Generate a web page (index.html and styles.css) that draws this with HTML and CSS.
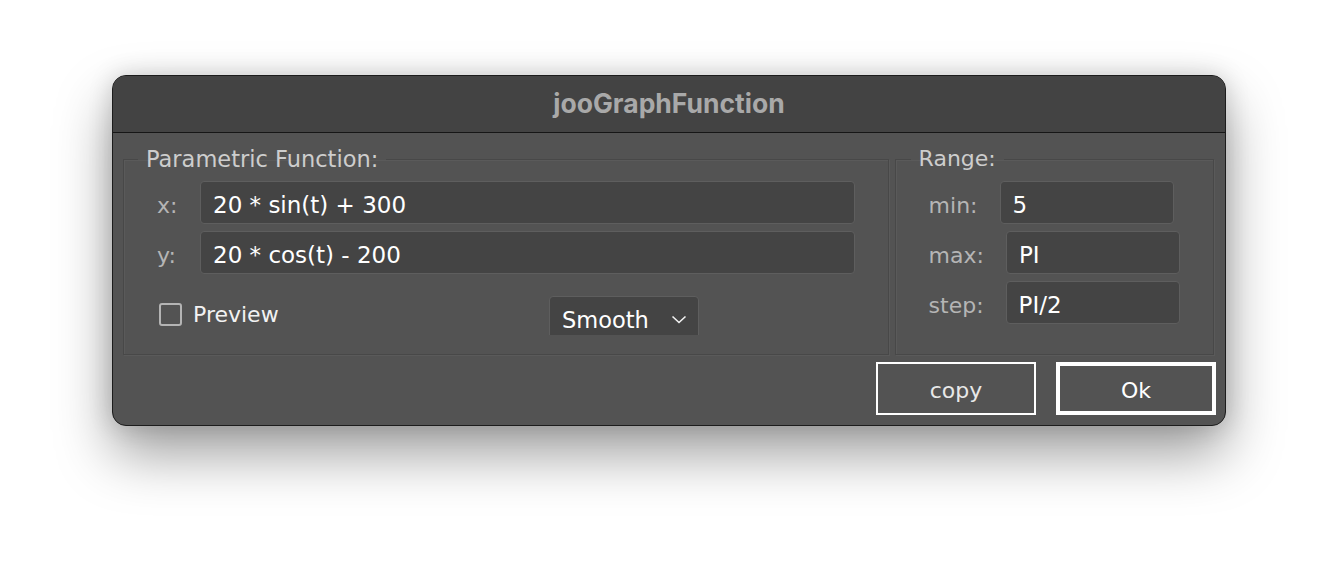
FILE: index.html
```html
<!DOCTYPE html>
<html lang="en">
<head>
<meta charset="utf-8">
<title>jooGraphFunction</title>
<link rel="stylesheet" href="styles.css">
</head>
<body>
<div class="stage">
  <div class="window">
    <div class="titlebar">jooGraphFunction</div>
    <div class="content">
      <div class="panels">
        <fieldset class="panel panel-func">
          <legend>Parametric Function:</legend>
          <div class="panel-body">
            <div class="frow"><span class="flabel">x:</span><div class="field wide">20 * sin(t) + 300</div></div>
            <div class="frow"><span class="flabel">y:</span><div class="field wide">20 * cos(t) - 200</div></div>
            <div class="optrow">
              <label class="check"><span class="box"></span><span class="check-text">Preview</span></label>
              <div class="clip">
                <div class="select"><span>Smooth</span>
                  <svg class="chev" width="16" height="9" viewBox="0 0 16 9"><polyline points="1.5,1.5 8,7.5 14.5,1.5" fill="none" stroke="#f2f2f2" stroke-width="1.6"/></svg>
                </div>
              </div>
            </div>
          </div>
        </fieldset>
        <fieldset class="panel panel-range">
          <legend>Range:</legend>
          <div class="panel-body">
            <div class="rrow"><span class="rlabel">min:</span><div class="field narrow">5</div></div>
            <div class="rrow"><span class="rlabel">max:</span><div class="field narrow">PI</div></div>
            <div class="rrow"><span class="rlabel">step:</span><div class="field narrow">PI/2</div></div>
          </div>
        </fieldset>
      </div>
      <div class="buttons">
        <button class="btn">copy</button>
        <button class="btn btn-default">Ok</button>
      </div>
    </div>
  </div>
</div>
</body>
</html>
```
FILE: styles.css
```css
html, body {
  margin: 0;
  padding: 0;
  background: #ffffff;
  height: 100%;
}
body {
  font-family: "DejaVu Sans", "Noto Sans", sans-serif;
  overflow: hidden;
}
.stage {
  padding: 75px 0 0 112px;
  min-height: 100%;
  box-sizing: border-box;
}
.window {
  box-sizing: border-box;
  width: 1114px;
  height: 351px;
  background: #535353;
  border: 1px solid #1c1c1c;
  border-radius: 14px;
  overflow: hidden;
  box-shadow: 0 28px 56px rgba(0, 0, 0, 0.38), 0 0 24px rgba(0, 0, 0, 0.16);
}
.titlebar {
  height: 56px;
  background: #434343;
  border-bottom: 1px solid #161616;
  color: #a9a9a9;
  font-family: "Inter", "Liberation Sans", sans-serif;
  font-weight: 700;
  font-size: 26.5px;
  line-height: 54px;
  text-align: center;
}
.content {
  padding: 15px 11px 0 10px;
}
.panels {
  display: flex;
  gap: 6px;
}
.panel {
  box-sizing: border-box;
  height: 207px;
  margin: 0;
  padding: 11px 0 0 0;
  border: 1px solid #484848;
  box-shadow: 1px 1px 0 #5a5a5a, inset 1px 1px 0 #5a5a5a;
  min-width: 0;
}
.panel-body {
  padding-left: 33px;
}
.panel-func {
  width: 767px;
}
.panel-range {
  width: 320px;
}
legend {
  margin-left: 14px;
  padding: 0 8px;
  color: #cdcdcd;
  font-size: 22.5px;
  line-height: 22px;
}
.panel-range legend {
  margin-left: 15px;
  font-size: 22px;
}
.frow, .rrow {
  display: flex;
  align-items: center;
  margin-bottom: 7px;
}
.flabel {
  width: 43px;
  color: #b5b5b5;
  font-size: 22px;
  padding-top: 5px;
}
.rlabel {
  color: #b5b5b5;
  font-size: 22px;
  margin-right: 22px;
  padding-top: 5px;
}
.field {
  box-sizing: border-box;
  height: 43px;
  background: #444444;
  border: 1px solid #5e5e5e;
  border-radius: 4px;
  color: #ffffff;
  font-size: 23px;
  line-height: 41px;
  padding: 3px 0 0 12px;
}
.wide {
  width: 655px;
}
.narrow {
  width: 174px;
}
.optrow {
  display: flex;
  margin-top: 22px;
  height: 39px;
}
.check {
  width: 392px;
  display: flex;
  align-items: center;
  height: 37px;
  color: #f2f2f2;
  font-size: 22px;
}
.box {
  box-sizing: border-box;
  width: 23px;
  height: 23px;
  margin: 0 11px 0 2px;
  border: 2px solid #b4b4b4;
  border-radius: 3px;
}
.clip {
  height: 39px;
  overflow: hidden;
}
.select {
  box-sizing: border-box;
  width: 150px;
  height: 48px;
  background: #444444;
  border: 1px solid #5e5e5e;
  border-radius: 4px;
  color: #ffffff;
  font-size: 22.5px;
  display: flex;
  align-items: center;
  justify-content: space-between;
  padding: 0 11px 1px 12px;
}
.chev {
  display: block;
  margin-top: 0;
}
.buttons {
  display: flex;
  justify-content: flex-end;
  gap: 20px;
  margin: 7px -2px 0 0;
}
.btn {
  box-sizing: border-box;
  width: 160px;
  height: 53px;
  background: transparent;
  border: 2px solid #ffffff;
  color: #e8e8e8;
  font-family: "DejaVu Sans", "Noto Sans", sans-serif;
  font-size: 22px;
  padding: 4px 0 0 0;
}
.btn-default {
  border-width: 4px;
  color: #ffffff;
}
```
